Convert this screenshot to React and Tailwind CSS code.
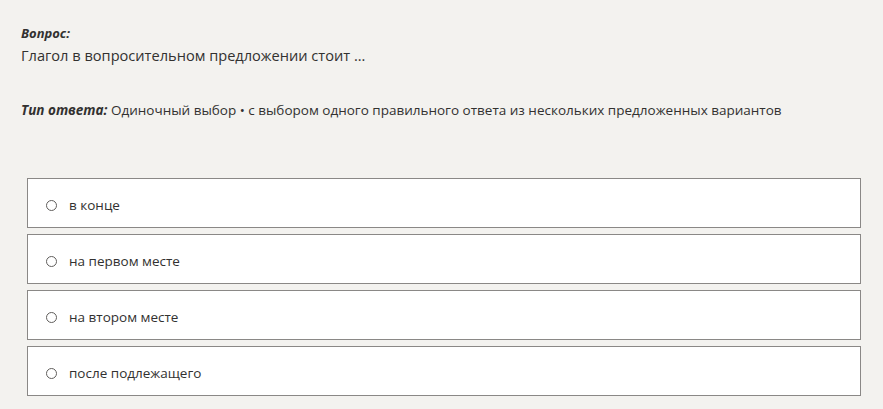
export default function App() {
  const options = ['в конце', 'на первом месте', 'на втором месте', 'после подлежащего'];
  return (
    <div className="w-[883px] h-[409px] bg-[#f3f2ef] text-[#323130] font-['Open_Sans','Noto_Sans',sans-serif] overflow-hidden">
      <div className="pl-[21px] pt-[24px]">
        <div className="text-[13px] leading-[18px] italic font-bold">Вопрос:</div>
        <div className="text-[14.6px] leading-[22px] mt-[2px]">Глагол в вопросительном предложении стоит ...</div>
        <div className="text-[13.5px] leading-[18px] mt-[35px]">
          <span className="italic font-bold">Тип ответа:</span> Одиночный выбор • с выбором одного правильного ответа из нескольких предложенных вариантов
        </div>
      </div>
      <div className="ml-[27px] w-[834px] mt-[59px] flex flex-col gap-[6px]">
        {options.map((o) => (
          <label key={o} className="h-[50px] bg-white border border-[#8a8886] flex items-center pl-[18px] pt-[4px] text-[13.5px]">
            <span className="w-[11px] h-[11px] rounded-full border border-[#605e5c] mr-[12px]" />
            {o}
          </label>
        ))}
      </div>
    </div>
  );
}
